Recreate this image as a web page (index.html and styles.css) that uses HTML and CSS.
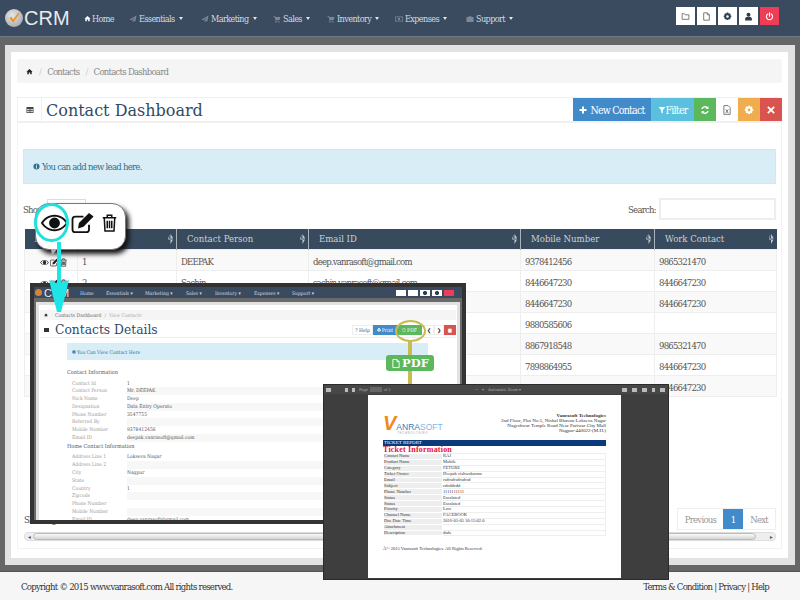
FILE: index.html
```html
<!DOCTYPE html>
<html lang="en">
<head>
    <meta charset="UTF-8">
    <title>Contact Dashboard</title>
    <link rel="stylesheet" href="styles.css">
</head>
<body>
    <svg class="defs" width="0" height="0">
        <symbol id="i-home" viewBox="0 0 16 16"><path d="M8 2 1 8.500h2V14h3.500v-4h3v4H13V8.500h2z"/></symbol>
        <symbol id="i-send" viewBox="0 0 16 16"><path d="M15 1 1 9l4 1.500L13 4l-6 7.500V15l2.500-3 3 1z"/></symbol>
        <symbol id="i-cart" viewBox="0 0 16 16"><path d="M1 2h3l1 2h10l-2 6H6l-.5 1.500H13V13H4l1-3-2-6.500H1z"/><circle cx="5.500" cy="14.500" r="1.200"/><circle cx="12" cy="14.500" r="1.200"/></symbol>
        <symbol id="i-case" viewBox="0 0 16 16"><path d="M6 2h4l1 2h4v10H1V4h4zM6.500 3.500 6 4h4l-.5-.5z"/></symbol>
        <symbol id="i-money" viewBox="0 0 16 16"><path fill-rule="evenodd" d="M0 3h16v10H0zM1.500 4.500v7h13v-7zM8 5.500a2.500 2.500 0 1 1 0 5 2.500 2.500 0 0 1 0-5z"/></symbol>
        <symbol id="i-folder" viewBox="0 0 16 16"><path fill="none" stroke="currentColor" stroke-width="1.500" d="M2 3h4l1.500 2H14v8H2z"/></symbol>
        <symbol id="i-file" viewBox="0 0 16 16"><path fill="none" stroke="currentColor" stroke-width="1.500" d="M3 1.500h6.500L13 5v9.500H3zM9.500 1.500V5H13"/></symbol>
        <symbol id="i-gear" viewBox="0 0 16 16"><path fill-rule="evenodd" d="M6.500 1h3l.4 2 1.700-1 2.100 2.100-1 1.700 2 .4v3l-2 .4 1 1.700-2.100 2.100-1.700-1-.4 2h-3l-.4-2-1.700 1-2.100-2.100 1-1.700-2-.4v-3l2-.4-1-1.700L4.400 2l1.700 1zM8 5.700a2.300 2.300 0 1 0 0 4.600 2.300 2.300 0 0 0 0-4.600z"/></symbol>
        <symbol id="i-user" viewBox="0 0 16 16"><circle cx="8" cy="5" r="3.500"/><path d="M2 15v-3c0-2 2-3 3.500-3h5c1.500 0 3.500 1 3.500 3v3z"/></symbol>
        <symbol id="i-power" viewBox="0 0 16 16"><path fill="none" stroke="currentColor" stroke-width="2" stroke-linecap="round" d="M5 3.500a5.500 5.500 0 1 0 6 0M8 1.500v6"/></symbol>
        <symbol id="i-table" viewBox="0 0 16 16"><path fill-rule="evenodd" d="M1 2h14v12H1zM2.500 6v2h3V6zm4.500 0v2h2V6zm3.500 0v2h3V6zm-8 3.500v3h3v-3zm4.500 0v3h2v-3zm3.500 0v3h3v-3z"/></symbol>
        <symbol id="i-plus" viewBox="0 0 16 16"><path d="M6 1h4v5h5v4h-5v5H6v-5H1V6h5z"/></symbol>
        <symbol id="i-filter" viewBox="0 0 16 16"><path d="M1 2h14L9.500 8.500V15l-3-2V8.500z"/></symbol>
        <symbol id="i-sync" viewBox="0 0 16 16"><path d="M13.500 2v4.500H9l1.700-1.700A4 4 0 0 0 4.300 6.500H2A6.300 6.300 0 0 1 12.300 3.300zM2.500 14V9.500H7l-1.700 1.700a4 4 0 0 0 6.400-1.700H14a6.300 6.300 0 0 1-10.300 3.200z"/></symbol>
        <symbol id="i-xls" viewBox="0 0 16 16"><path fill="none" stroke="currentColor" stroke-width="1.200" d="M3 1h7l3 3v11H3zM6 7l4 6M10 7l-4 6"/></symbol>
        <symbol id="i-close" viewBox="0 0 16 16"><path d="M4 2l4 4 4-4 2 2-4 4 4 4-2 2-4-4-4 4-2-2 4-4-4-4z"/></symbol>
        <symbol id="i-info" viewBox="0 0 16 16"><path fill-rule="evenodd" d="M8 1a7 7 0 1 1 0 14A7 7 0 0 1 8 1zM7 3.500V6h2V3.500zM6.500 7v1H7v3.500h-.5v1h3v-1H9V7z"/></symbol>
        <symbol id="i-eye" viewBox="0 0 32 24"><path fill-rule="evenodd" d="M16 3c7 0 12.500 4.500 15 9-2.500 4.500-8 9-15 9S3.500 16.500 1 12C3.500 7.500 9 3 16 3zM16 5C10.500 5 6 8 3.500 12 6 16 10.500 19 16 19s10-3 12.500-7C26 8 21.500 5 16 5zm0 1a6 6 0 1 1 0 12 6 6 0 0 1 0-12z"/></symbol>
        <symbol id="i-edit" viewBox="0 0 26 24"><path fill="none" stroke="currentColor" stroke-width="2" d="M19 14v5a3 3 0 0 1-3 3H4a3 3 0 0 1-3-3V8a3 3 0 0 1 3-3h9"/><path d="M8 12 19 1l5 4-11 11-6 2z"/></symbol>
        <symbol id="i-trash" viewBox="0 0 20 24"><path fill="none" stroke="currentColor" stroke-width="2" d="M1 5h18M7 4V1.500h6V4M3 5l1 17.500h12L17 5M7 9v10M10 9v10M13 9v10"/></symbol>
        <symbol id="i-print" viewBox="0 0 16 16"><path d="M4 1h8v4H4zM1 6h14v6h-3v3H4v-3H1zm4.500 4v3.500h5V10z"/></symbol>
    </svg>

    <div id="nav" class="navbar">
        <div class="brand"><span class="brand-ball"><svg viewBox="0 0 16 16"><path d="M3 8l2-1.500L7 10l6-8 1 1-7 10z"/></svg></span>CRM</div>
        <ul class="nav-menu">
            <li class="item-home"><svg class="ico"><use href="#i-home"/></svg>Home</li>
            <li class="item-ess"><svg class="ico dim"><use href="#i-send"/></svg>Essentials<i class="caret"></i></li>
            <li class="item-mkt"><svg class="ico dim"><use href="#i-send"/></svg>Marketing<i class="caret"></i></li>
            <li class="item-sales"><svg class="ico dim"><use href="#i-cart"/></svg>Sales<i class="caret"></i></li>
            <li class="item-inv"><svg class="ico dim"><use href="#i-cart"/></svg>Inventory<i class="caret"></i></li>
            <li class="item-exp"><svg class="ico dim"><use href="#i-money"/></svg>Expenses<i class="caret"></i></li>
            <li class="item-sup"><svg class="ico dim"><use href="#i-case"/></svg>Support<i class="caret"></i></li>
        </ul>
        <div class="nav-tools">
            <span class="tool"><svg><use href="#i-folder"/></svg></span>
            <span class="tool"><svg><use href="#i-file"/></svg></span>
            <span class="tool dark"><svg><use href="#i-gear"/></svg></span>
            <span class="tool dark"><svg><use href="#i-user"/></svg></span>
            <span class="tool red"><svg><use href="#i-power"/></svg></span>
        </div>
    </div>

    <div id="frame">
        <div id="panel">
            <div class="crumbs">
                <svg class="crumb-home"><use href="#i-home"/></svg>
                <span class="sep">/</span><span>Contacts</span>
                <span class="sep">/</span><span>Contacts Dashboard</span>
            </div>

            <div class="page-head">
                <span class="head-ico"><svg><use href="#i-table"/></svg></span>
                <h1>Contact Dashboard</h1>
                <div class="head-btns">
                    <span class="btn blue wide"><svg><use href="#i-plus"/></svg> New Contact</span>
                    <span class="btn cyan"><svg><use href="#i-filter"/></svg>Filter</span>
                    <span class="btn green sq"><svg><use href="#i-sync"/></svg></span>
                    <span class="btn white sq"><svg><use href="#i-xls"/></svg></span>
                    <span class="btn orange sq"><svg><use href="#i-gear"/></svg></span>
                    <span class="btn redb sq"><svg><use href="#i-close"/></svg></span>
                </div>
            </div>

            <div class="content">
                <div class="alert"><svg><use href="#i-info"/></svg> You can add new lead here.</div>

                <div class="tools-row">
                    <div class="show">Show <span class="show-box"></span></div>
                    <div class="search">Search: <span class="search-box"></span></div>
                </div>

                <table class="grid">
                    <colgroup>
                        <col class="c1"><col class="c2"><col class="c3"><col class="c4"><col class="c5"><col class="c6">
                    </colgroup>
                    <thead>
                        <tr>
                            <th>Action<i class="sort"></i></th>
                            <th>Sr No<i class="sort"></i></th>
                            <th>Contact Person<i class="sort"></i></th>
                            <th>Email ID<i class="sort"></i></th>
                            <th>Mobile Number<i class="sort"></i></th>
                            <th>Work Contact<i class="sort"></i></th>
                        </tr>
                    </thead>
                    <tbody>
                        <tr><td class="acts"><svg class="a-eye"><use href="#i-eye"/></svg><svg class="a-edit"><use href="#i-edit"/></svg><svg class="a-trash"><use href="#i-trash"/></svg></td><td>1</td><td>DEEPAK</td><td>deep.vanrasoft@gmail.com</td><td>9378412456</td><td>9865321470</td></tr>
                        <tr><td class="acts"><svg class="a-eye"><use href="#i-eye"/></svg><svg class="a-edit"><use href="#i-edit"/></svg><svg class="a-trash"><use href="#i-trash"/></svg></td><td>2</td><td>Sachin</td><td>sachin.vanrasoft@gmail.com</td><td>8446647230</td><td>8446647230</td></tr>
                        <tr><td></td><td></td><td></td><td></td><td>8446647230</td><td>8446647230</td></tr>
                        <tr><td></td><td></td><td></td><td></td><td>9880585606</td><td></td></tr>
                        <tr><td></td><td></td><td></td><td></td><td>8867918548</td><td>9865321470</td></tr>
                        <tr><td></td><td></td><td></td><td></td><td>7898864955</td><td>8446647230</td></tr>
                        <tr><td></td><td></td><td></td><td></td><td>8867918548</td><td>8446647230</td></tr>
                    </tbody>
                </table>

                <div class="table-foot">
                    <span>Showing</span>
                    <div class="pager">
                        <span class="pg">Previous</span><span class="pg on">1</span><span class="pg">Next</span>
                    </div>
                </div>
                <div class="hscroll">
                    <span class="sc-arrow">&#9666;</span><span class="sc-thumb"></span><span class="sc-arrow">&#9656;</span>
                </div>
            </div>
        </div>
    </div>

    <div id="footer">
        <span>Copyright &copy; 2015 www.vanrasoft.com All rights reserved.</span>
        <span>Terms &amp; Condition | Privacy | Help</span>
    </div>

    <!-- callout over the action icons -->
    <div class="callout">
        <svg class="c-eye"><use href="#i-eye"/></svg>
        <svg class="c-edit"><use href="#i-edit"/></svg>
        <svg class="c-trash"><use href="#i-trash"/></svg>
    </div>
    <span class="eye-ring"></span>

    <!-- contact details window -->
    <div id="win-detail">
        <div class="m-nav">
            <div class="m-brand"><span class="m-ball"></span>CRM</div>
            <ul class="m-menu">
                <li class="m-home">Home</li>
                <li class="m-ess">Essentials &#9662;</li>
                <li class="m-mkt">Marketing &#9662;</li>
                <li class="m-sal">Sales &#9662;</li>
                <li class="m-inv">Inventory &#9662;</li>
                <li class="m-exp">Expenses &#9662;</li>
                <li class="m-sup">Support &#9662;</li>
            </ul>
            <div class="m-tools">
                <span class="m-tool"></span><span class="m-tool"></span><span class="m-tool k"></span><span class="m-tool k"></span><span class="m-tool r"></span>
            </div>
        </div>
        <div class="m-band"></div>
        <div class="m-body">
            <div class="m-crumbs"><svg class="m-crumb-ico"><use href="#i-home"/></svg><b>Contacts Dashboard</b><span class="m-sep">/</span>View Contacts</div>
            <div class="m-head">
                <i class="m-sq"></i>
                <h2>Contacts Details</h2>
                <div class="m-btns">
                    <span class="m-btn">? Help</span>
                    <span class="m-btn blue"><svg><use href="#i-print"/></svg>Print</span>
                    <span class="m-btn green"><svg><use href="#i-file"/></svg>PDF</span>
                    <span class="m-btn nar">&#10094;</span>
                    <span class="m-btn nar">&#10095;</span>
                    <span class="m-btn nar redb">&#9632;</span>
                </div>
            </div>
            <div class="m-alert"><svg><use href="#i-info"/></svg>You Can View Contact Here</div>
            <h3>Contact Information</h3>
            <dl class="m-list">
                <dt>Contact Id</dt><dd>1</dd>
                <dt>Contact Person</dt><dd>Mr. DEEPAK</dd>
                <dt>Nick Name</dt><dd>Deep</dd>
                <dt>Designation</dt><dd>Data Entry Operato</dd>
                <dt>Phone Number</dt><dd>3547755</dd>
                <dt>Referred By</dt><dd></dd>
                <dt>Mobile Number</dt><dd>9378412456</dd>
                <dt>Email ID</dt><dd>deepak.vanrasoft@gmail.com</dd>
            </dl>
            <h3>Home Contact Information</h3>
            <dl class="m-list">
                <dt>Address Line 1</dt><dd>Lokseva Nagar</dd>
                <dt>Address Line 2</dt><dd></dd>
                <dt>City</dt><dd>Nagpur</dd>
                <dt>State</dt><dd></dd>
                <dt>Country</dt><dd>1</dd>
                <dt>Zipcode</dt><dd></dd>
                <dt>Phone Number</dt><dd></dd>
                <dt>Mobile Number</dt><dd></dd>
                <dt>Email ID</dt><dd>deep.vanrasoft@gmail.com</dd>
            </dl>
        </div>
    </div>

    <!-- arrows and markers between the windows -->
    <svg class="arrow" width="20" height="70" viewBox="0 0 20 70">
        <path d="M8 0h4v44H8z"/><path d="M0 38 10 42 20 38 12 70H8z"/>
    </svg>
    <span class="pdf-line"></span>
    <span class="pdf-ring"></span>
    <div class="pdf-badge"><svg><use href="#i-file"/></svg>PDF</div>

    <!-- pdf viewer window -->
    <div id="win-pdf">
        <div class="v-bar">
            <div class="v-left"><i class="v-ico"></i><i class="v-gap"></i><i class="v-ico sm"></i><i class="v-ico sm"></i><span>Page</span><i class="v-field"></i><span>of 1</span></div>
            <div class="v-mid">&minus; &nbsp; + &nbsp; Automatic Zoom &#9662;</div>
            <div class="v-right"><i class="v-ico"></i><i class="v-ico"></i><i class="v-ico"></i><i class="v-ico sm"></i><i class="v-ico"></i></div>
        </div>
        <div class="v-sheet">
            <div class="r-top">
                <div class="r-logo"><b>V</b>ANRA<em>SOFT</em><small>TECHNOLOGIES</small></div>
                <div class="r-addr">
                    <strong>Vanrasoft Technologies</strong><br>
                    2nd Floor, Plot No:5, Nishal Bhavan Lokseva Nagar<br>
                    Nageshwar Temple Road Near Pariwar City Mall<br>
                    Nagpur-440022-(M.H.)
                </div>
            </div>
            <div class="r-title">TICKET REPORT</div>
            <div class="r-sub">Ticket Information</div>
            <table class="r-table">
                <tr><th>Contact Name</th><td>RAJ</td></tr>
                <tr><th>Product Name</th><td>Mobile</td></tr>
                <tr><th>Category</th><td>FETURE</td></tr>
                <tr><th>Ticket Owner</th><td>Deepak vishwakarma</td></tr>
                <tr><th>Email</th><td>rsdrsdrsdrsdrsd</td></tr>
                <tr><th>Subject</th><td>cdcddcdd</td></tr>
                <tr><th>Phone Number</th><td>1111111111</td></tr>
                <tr><th>Status</th><td>Escalated</td></tr>
                <tr><th>Status</th><td>Escalated</td></tr>
                <tr><th>Priority</th><td>Low</td></tr>
                <tr><th>Channel Name</th><td>FACEBOOK</td></tr>
                <tr><th>Due Date Time</th><td>2016-05-05 10:15:02.0</td></tr>
                <tr><th>Attachment</th><td></td></tr>
                <tr><th>Description</th><td>dsds</td></tr>
            </table>
            <p class="r-foot">&Acirc;&copy; 2015 Vanrasoft Technologies. All Rights Reserved.</p>
        </div>
    </div>
</body>
</html>
```

FILE: styles.css
```css
*{
    padding: 0;
    margin: 0;
    box-sizing: border-box;
}

html,body{
    height: 600px;
    overflow: hidden;
}

body{
    position: relative;
    display: flex;
    flex-direction: column;
    font-family: "DejaVu Serif Condensed", "DejaVu Serif", serif;
    font-size: 9.500px;
    letter-spacing: -.75px;
    color: #555;
    background: #f6f6f6;
}

.defs{
    position: absolute;
}

svg{
    fill: currentColor;
}

ul{
    list-style: none;
}

/* top bar */
.navbar{
    height: 37px;
    flex: none;
    background: #3a4a5f;
    border-bottom: 1px solid #6d7a8a;
    display: flex;
    align-items: center;
    padding-left: 5px;
    color: #d5dbe2;
}

.brand{
    width: 79px;
    display: flex;
    align-items: center;
    gap: 1px;
    font: 20px "Liberation Sans", sans-serif;
    letter-spacing: 0;
    color: #e8ebee;
}

.brand-ball{
    width: 18px;
    height: 18px;
    border-radius: 50%;
    background: radial-gradient(circle at 40% 35%, #e6e6e6, #9a9a9a);
    padding: 2px;
}

.brand-ball svg{
    fill: #ef8a17;
    display: block;
}

.nav-menu{
    display: flex;
    flex: 1;
    padding-top: 1px;
    font-size: 9px;
    letter-spacing: -.6px;
}

.nav-menu li{
    display: flex;
    align-items: center;
}

.ico{
    width: 7px;
    height: 7px;
    margin-right: 1px;
    color: #fff;
}

.ico.dim{
    color: #7c8897;
    width: 8px;
    height: 8px;
    margin-right: 2px;
}

.caret{
    width: 0;
    height: 0;
    margin-left: 4px;
    border-style: solid;
    border-width: 3px 2.500px 0;
    border-color: #e5e5e5 transparent transparent;
}

.item-home{ width: 45px; }
.item-ess{ width: 72px; }
.item-mkt{ width: 72px; }
.item-sales{ width: 54px; }
.item-inv{ width: 68px; }
.item-exp{ width: 71px; }
.item-sup{ width: 60px; }

.nav-tools{
    display: flex;
    gap: 2px;
    margin: 0 21px 4px 0;
}

.tool{
    width: 19px;
    height: 18px;
    background: #fff;
    color: #666;
    display: flex;
    align-items: center;
    justify-content: center;
}

.tool svg{
    width: 9px;
    height: 9px;
}

.tool.dark{
    color: #2c3e50;
}

.tool.red{
    background: #ee3d55;
    color: #fff;
}

/* page frame */
#frame{
    flex: 1;
    min-height: 0;
    background: #666;
    padding: 8px 5px 6px;
    border-bottom: 1px solid #555;
}

#panel{
    height: 100%;
    background: #fff;
    border: solid #e2e2e2;
    border-width: 7px 7px 7px 6px;
    padding: 7px 6px 0 6px;
    display: flex;
    flex-direction: column;
}

.crumbs{
    height: 24px;
    flex: none;
    background: #f5f5f5;
    border-radius: 3px;
    display: flex;
    align-items: center;
    padding-left: 9px;
    color: #888;
}

.crumb-home{
    width: 7px;
    height: 7px;
    color: #222;
}

.sep{
    color: #ccc;
    margin: 0 6px;
}

.page-head{
    height: 26px;
    flex: none;
    margin-top: 14px;
    display: flex;
    align-items: center;
    border: solid #f0f0f0;
    border-width: 1px 0 2px 1px;
}

.head-ico{
    width: 24px;
    height: 100%;
    border-right: 1px solid #f0f0f0;
    display: flex;
    align-items: center;
    justify-content: center;
    color: #444;
}

.head-ico svg{
    width: 8px;
    height: 8px;
}

.page-head h1{
    flex: 1;
    margin-left: 4px;
    padding-top: 2px;
    font: normal 16px "DejaVu Serif", serif;
    letter-spacing: 0;
    color: #2f4a68;
}

.head-btns{
    display: flex;
    height: 100%;
}

.btn{
    height: 100%;
    display: flex;
    align-items: center;
    justify-content: center;
    color: #fff;
    font-size: 10.500px;
}

.btn svg{
    width: 8px;
    height: 8px;
}

.btn.sq svg{
    width: 10px;
    height: 10px;
}

.btn.wide{
    width: 78px;
    gap: 3px;
}

.btn.cyan{
    width: 43px;
    background: #5bc0de;
}

.blue{ background: #428bca; }
.sq{ width: 22px; }
.green{ background: #5cb85c; }
.white{ background: #fff; color: #555; }
.orange{ background: #f0ad4e; }
.redb{ background: #d9534f; }

.content{
    flex: 1;
    min-height: 0;
    padding: 0 6px;
    margin-bottom: 9px;
    border: solid #f2f2f2;
    border-width: 0 1px 1px;
    display: flex;
    flex-direction: column;
}

.alert{
    height: 35px;
    flex: none;
    margin: 26px -1px 0;
    background: #d9edf7;
    border: 1px solid #cde9f1;
    color: #31708f;
    display: flex;
    align-items: center;
    gap: 2px;
    padding-left: 9px;
}

.alert svg{
    width: 7px;
    height: 7px;
}

.tools-row{
    height: 22px;
    flex: none;
    margin: 14px -1px 0;
    display: flex;
    justify-content: space-between;
    align-items: center;
}

.show,.search{
    display: flex;
    align-items: center;
    gap: 3px;
}

.show-box{
    width: 39px;
    height: 20px;
    border: 1px solid #ddd;
}

.search-box{
    width: 117px;
    height: 22px;
    border: 2px solid #eee;
}

.grid{
    flex: none;
    width: 752px;
    margin: 9px 0 0;
    border-collapse: collapse;
    table-layout: fixed;
    color: #555;
}

.c1{ width: 53px; }
.c2{ width: 99px; }
.c3{ width: 132px; }
.c4{ width: 212px; }
.c5{ width: 134px; }
.c6{ width: 122px; }

.grid th{
    height: 20px;
    position: relative;
    background: #374a5e;
    color: #ccd3da;
    font-weight: normal;
    letter-spacing: 0;
    text-align: left;
    padding-left: 10px;
    border-right: 1px solid #aab2bb;
}

.grid th:last-child{
    border-right: 0;
}

.sort{
    position: absolute;
    right: 3px;
    top: 5px;
    width: 5px;
    height: 10px;
    background: #c6ccd3;
    clip-path: polygon(50% 0, 100% 40%, 100% 45%, 0 45%, 0 40%, 0 40%, 50% 0, 0 55%, 100% 55%, 50% 100%);
}

.grid td{
    height: 21px;
    padding: 3px 0 0 4px;
    border: 1px solid #eee;
    font-size: 9.500px;
    letter-spacing: -.8px;
}

.grid tr:nth-child(odd) td{
    background: #f9f9f9;
}

.acts{
    text-align: center;
    white-space: nowrap;
}

.acts svg{
    color: #222;
    vertical-align: middle;
}

.a-eye{ width: 9px; height: 7px; }
.a-edit{ width: 9px; height: 9px; margin-left: 1px; }
.a-trash{ width: 7px; height: 9px; margin-left: 1px; }

.table-foot{
    margin: auto -1px 0 0;
    display: flex;
    justify-content: space-between;
    align-items: center;
    flex: none;
}

.pager{
    display: flex;
    height: 22px;
    border: 1px solid #eee;
    color: #999;
}

.pg{
    padding: 0 7px;
    display: flex;
    align-items: center;
}

.pg.on{
    width: 20px;
    padding: 0;
    justify-content: center;
    background: #428bca;
    color: #fff;
}

.hscroll{
    height: 9px;
    flex: none;
    margin: 2px -1px 7px 0;
    display: flex;
    align-items: center;
    color: #555;
    font-size: 6px;
    border: 1px solid #ddd;
    border-radius: 4px;
    background: #eee;
}

.sc-arrow{
    width: 8px;
    text-align: center;
}

.sc-thumb{
    flex: 1;
    height: 100%;
    margin-right: 11px;
    border-radius: 4px;
    background: linear-gradient(#fafafa, #d5d5d5);
    border: 1px solid #bbb;
}

#footer{
    height: 28px;
    flex: none;
    display: flex;
    justify-content: space-between;
    align-items: center;
    padding: 0 31px 0 21px;
    color: #333;
}

/* callout */
.callout{
    position: absolute;
    left: 35px;
    top: 203px;
    width: 91px;
    height: 47px;
    background: #fff;
    border: 1px solid #777;
    border-radius: 14px;
    box-shadow: 3px 4px 5px #111;
    color: #111;
}

.callout::after{
    content: "";
    position: absolute;
    left: 15px;
    top: 45px;
    border-style: solid;
    border-width: 7px 5px 0 1px;
    border-color: #aaa transparent transparent;
}

.callout svg{
    position: absolute;
}

.c-eye{ left: 4px; top: 7px; width: 29px; height: 24px; }
.c-edit{ left: 35px; top: 8px; width: 25px; height: 22px; }
.c-trash{ left: 66px; top: 8px; width: 15px; height: 22px; }

.eye-ring{
    position: absolute;
    left: 34px;
    top: 203px;
    width: 35px;
    height: 39px;
    border: 3px solid #1fdfdf;
    border-radius: 50%;
}

.arrow{
    position: absolute;
    left: 49px;
    top: 242px;
    z-index: 5;
    fill: #1fe6e6;
}

/* details window */
#win-detail{
    position: absolute;
    left: 30px;
    top: 283px;
    width: 436px;
    height: 241px;
    border: solid #333;
    border-width: 4px;
    background: #6a6a6a;
    overflow: hidden;
    font-size: 5px;
    letter-spacing: 0;
}

.m-nav{
    height: 11px;
    background: #3a4a5f;
    display: flex;
    align-items: center;
    color: #d5dbe2;
}

.m-brand{
    width: 42px;
    font: 11px "Liberation Sans", sans-serif;
    color: #eee;
    display: flex;
    align-items: center;
    padding-left: 1px;
}

.m-ball{
    width: 7px;
    height: 7px;
    border-radius: 50%;
    background: #d78436;
    margin-right: 2px;
}

.m-menu{
    display: flex;
    flex: 1;
    font-size: 5px;
}

.m-home{ width: 30px; padding-left: 4px; }
.m-ess{ width: 39px; }
.m-mkt{ width: 41px; }
.m-sal{ width: 29px; }
.m-inv{ width: 39px; }
.m-exp{ width: 38px; }
.m-sup{ width: 40px; }

.m-tools{
    display: flex;
    gap: 2px;
    margin-right: 8px;
}

.m-tool{
    width: 10px;
    height: 6px;
    background: #fff;
}

.m-tool.k{
    background: radial-gradient(circle, #2c3e50 30%, #fff 40%);
}

.m-tool.r{
    background: #ee3d55;
}

.m-band{
    height: 4px;
}

.m-body{
    height: 230px;
    background: #fff;
    margin: 0 2px;
    border: solid #e2e2e2;
    border-width: 3px 3px 0;
    padding: 5px 1px 0;
    color: #999;
}

.m-crumbs{
    height: 10px;
    background: #f5f5f5;
    display: flex;
    align-items: center;
    padding-left: 4px;
    color: #aaa;
}

.m-crumb-ico{
    width: 4px;
    height: 4px;
    margin-right: 7px;
    color: #222;
}

.m-crumbs b{
    font-weight: normal;
    color: #666;
}

.m-sep{
    margin: 0 3px;
}

.m-head{
    height: 15px;
    margin-top: 3px;
    display: flex;
    align-items: center;
    border-bottom: 1px solid #eee;
}

.m-sq{
    width: 5px;
    height: 4px;
    margin: 0 6px 0 4px;
    background: #333;
}

.m-head h2{
    flex: 1;
    font: normal 12.300px "DejaVu Serif", serif;
    color: #2f4a68;
}

.m-btns{
    display: flex;
    height: 10px;
}

.m-btn{
    display: flex;
    align-items: center;
    justify-content: center;
    gap: 1px;
    width: 21px;
    color: #555;
    border: 1px solid #eee;
}

.m-btn svg{
    width: 4px;
    height: 4px;
}

.m-btn.blue{
    width: 24px;
    color: #fff;
    border: 0;
}

.m-btn.green{
    width: 25px;
    margin-right: 2px;
    color: #fff;
    border: 0;
}

.m-btn.nar{
    width: 10px;
    color: #222;
}

.m-btn.redb{
    width: 12px;
    color: #fff;
    border: 0;
}

.m-alert{
    height: 17px;
    margin: 5px 28px 0 27px;
    background: #d9edf7;
    color: #31708f;
    display: flex;
    align-items: center;
    gap: 1px;
    padding-left: 5px;
}

.m-alert svg{
    width: 4px;
    height: 4px;
}

.m-body h3{
    margin: 9px 0 4.500px 27px;
    font-size: 5.500px;
    line-height: 6px;
    font-weight: normal;
    color: #555;
}

.m-list + h3{
    margin: 1.500px 0 4px 27px;
}

.m-list{
    display: grid;
    grid-template-columns: 55px 1fr;
    grid-auto-rows: 7.800px;
    margin: 0 28px 0 32px;
    line-height: 7.800px;
}

.m-list dd{
    color: #555;
}

.m-list dd:nth-of-type(even){
    background: #f7f7f7;
}

/* pdf markers */
.pdf-line{
    position: absolute;
    left: 408px;
    top: 341px;
    width: 4px;
    height: 44px;
    background: #c8bc50;
}

.pdf-ring{
    position: absolute;
    left: 395px;
    top: 320px;
    width: 31px;
    height: 22px;
    border: 2.500px solid #c8bc50;
    border-radius: 50%;
}

.pdf-badge{
    position: absolute;
    left: 386px;
    top: 355px;
    width: 48px;
    height: 16px;
    background: #5cb85c;
    border-radius: 3px;
    color: #fff;
    font: bold 11.500px "DejaVu Serif", serif;
    letter-spacing: 0;
    display: flex;
    align-items: center;
    justify-content: center;
    gap: 1px;
}

.pdf-badge svg{
    width: 10px;
    height: 11px;
}

/* pdf viewer */
#win-pdf{
    position: absolute;
    left: 323px;
    top: 384px;
    width: 346px;
    height: 196px;
    background: #3e3e3e;
    border: 1px solid #2b2b2b;
    font-size: 4px;
    letter-spacing: 0;
    color: #aaa;
}

.v-bar{
    height: 9px;
    background: #474747;
    display: flex;
    align-items: center;
    padding: 0 3px 0 2px;
}

.v-left{
    width: 149px;
    display: flex;
    align-items: center;
    gap: 4px;
}

.v-right{
    margin-left: auto;
    display: flex;
    align-items: center;
    gap: 5px;
}

.v-gap{
    width: 6px;
}

.v-ico{
    width: 5px;
    height: 4px;
    background: #bbb;
}

.v-ico.sm{
    width: 3px;
}

.v-field{
    width: 12px;
    height: 5px;
    background: #666;
    margin: 0 -2px;
}

.v-sheet{
    width: 253px;
    height: 183px;
    margin: 1px 0 0 44px;
    background: #fff;
    padding: 0 15px;
    color: #333;
    font-family: "Liberation Serif", serif;
    font-size: 4.500px;
}

.r-top{
    height: 44px;
    padding-top: 18px;
    display: flex;
    justify-content: space-between;
}

.r-logo{
    position: relative;
    padding-top: 6px;
    font: 8.500px "Liberation Sans", sans-serif;
    color: #2d7fc1;
}

.r-logo b{
    font-size: 20px;
    line-height: 8px;
    font-style: italic;
    color: #ef8a17;
}

.r-logo em{
    font-style: normal;
    color: #7fb6e8;
}

.r-logo small{
    position: absolute;
    left: 14px;
    top: 18px;
    font-size: 3px;
    letter-spacing: .6px;
    color: #aaa;
}

.r-addr{
    text-align: right;
    line-height: 5px;
    font-size: 5px;
    color: #333;
}

.r-title{
    height: 6px;
    margin-top: 1px;
    background: #0b3a7a;
    color: #fff;
    font-size: 5px;
    line-height: 6px;
    padding-left: 1px;
}

.r-sub{
    color: #e8142c;
    font-weight: bold;
    font-size: 8px;
    line-height: 7px;
    letter-spacing: .2px;
}

.r-table{
    width: 100%;
    border-collapse: collapse;
    table-layout: fixed;
}

.r-table th{
    width: 59px;
    height: 5.900px;
    background: #eee;
    font-weight: normal;
    text-align: left;
    border: 1px solid #fff;
    line-height: 4px;
}

.r-table td{
    height: 5.900px;
    border: 1px solid #eee;
    line-height: 4px;
}

.r-foot{
    margin-top: 10px;
}
```
